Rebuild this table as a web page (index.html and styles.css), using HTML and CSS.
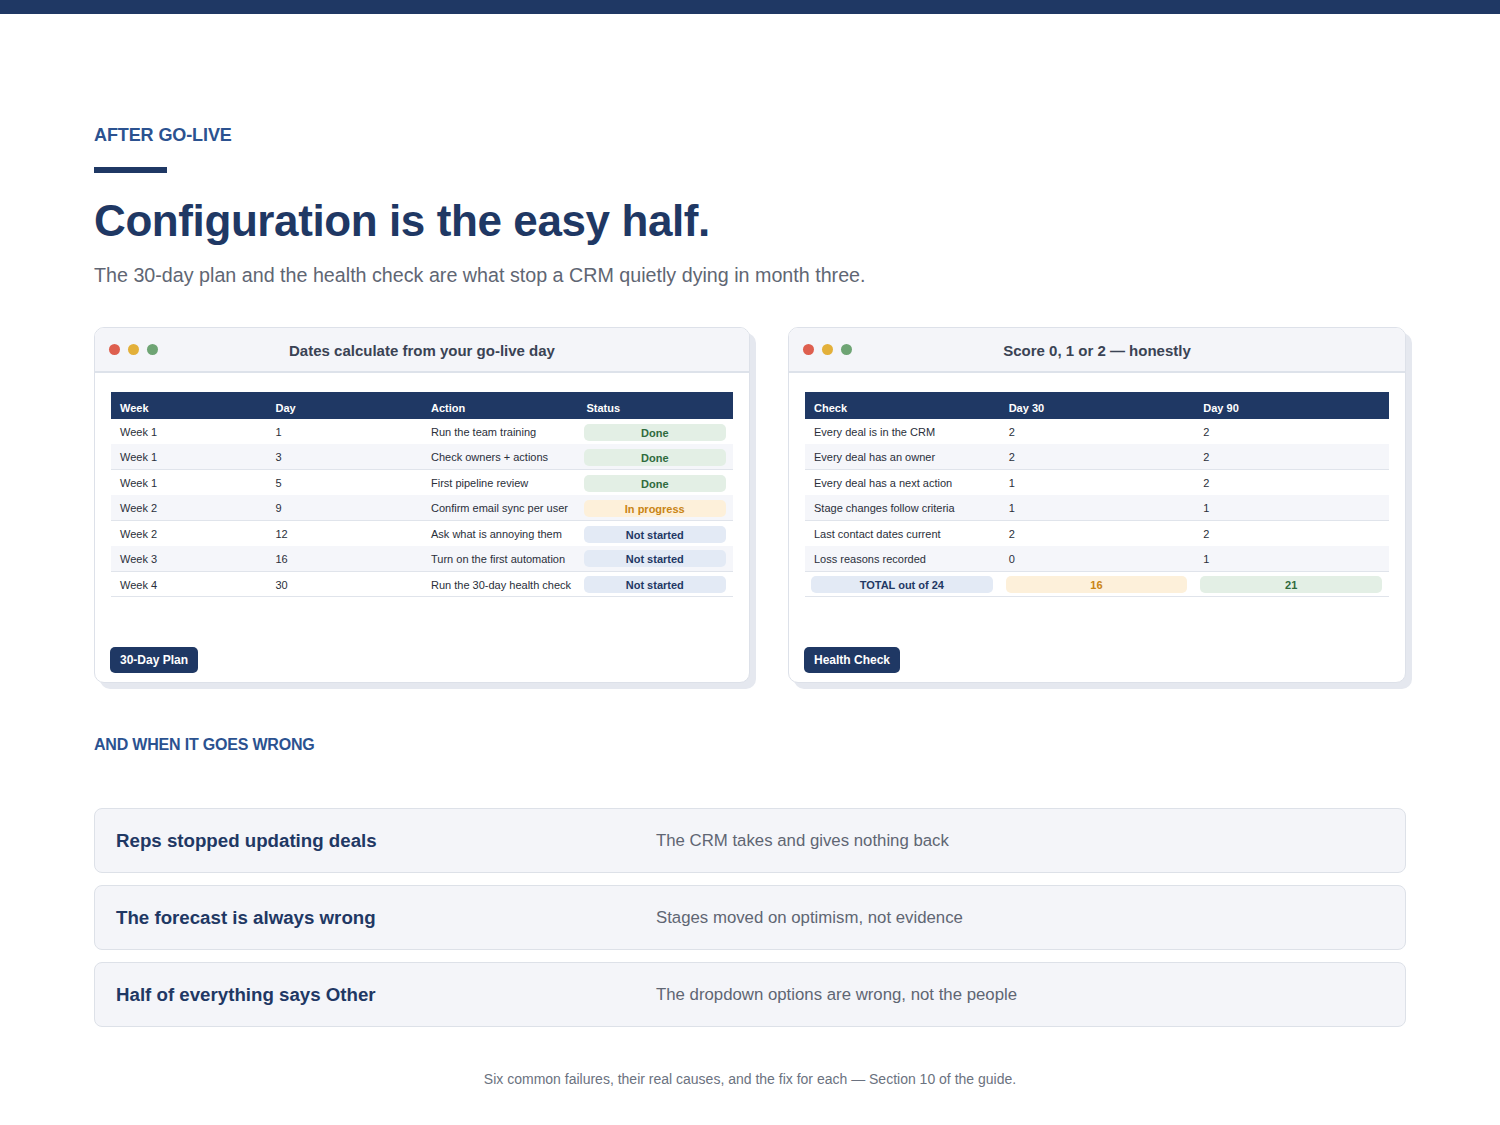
FILE: index.html
```html
<!DOCTYPE html>
<html lang="en">
<head>
<meta charset="utf-8">
<title>After go-live</title>
<link rel="stylesheet" href="styles.css">
</head>
<body>
<div class="topbar"></div>
<main class="page">
  <p class="eyebrow">AFTER GO-LIVE</p>
  <div class="rule"></div>
  <h1 class="title">Configuration is the easy half.</h1>
  <p class="lead">The 30-day plan and the health check are what stop a CRM quietly dying in month three.</p>

  <section class="cards">
    <article class="card">
      <header class="card-head">
        <span class="dots"><i class="dot red"></i><i class="dot amber"></i><i class="dot green"></i></span>
        <span class="card-title">Dates calculate from your go-live day</span>
      </header>
      <div class="card-body">
        <table class="tbl cols4">
          <thead><tr><th>Week</th><th>Day</th><th>Action</th><th>Status</th></tr></thead>
          <tbody>
            <tr><td>Week 1</td><td>1</td><td>Run the team training</td><td class="pillcell"><span class="pill done">Done</span></td></tr>
            <tr><td>Week 1</td><td>3</td><td>Check owners + actions</td><td class="pillcell"><span class="pill done">Done</span></td></tr>
            <tr><td>Week 1</td><td>5</td><td>First pipeline review</td><td class="pillcell"><span class="pill done">Done</span></td></tr>
            <tr><td>Week 2</td><td>9</td><td>Confirm email sync per user</td><td class="pillcell"><span class="pill prog">In progress</span></td></tr>
            <tr><td>Week 2</td><td>12</td><td>Ask what is annoying them</td><td class="pillcell"><span class="pill todo">Not started</span></td></tr>
            <tr><td>Week 3</td><td>16</td><td>Turn on the first automation</td><td class="pillcell"><span class="pill todo">Not started</span></td></tr>
            <tr><td>Week 4</td><td>30</td><td>Run the 30-day health check</td><td class="pillcell"><span class="pill todo">Not started</span></td></tr>
          </tbody>
        </table>
        <span class="tag">30-Day Plan</span>
      </div>
    </article>

    <article class="card">
      <header class="card-head">
        <span class="dots"><i class="dot red"></i><i class="dot amber"></i><i class="dot green"></i></span>
        <span class="card-title">Score 0, 1 or 2 — honestly</span>
      </header>
      <div class="card-body">
        <table class="tbl cols3">
          <thead><tr><th>Check</th><th>Day 30</th><th>Day 90</th></tr></thead>
          <tbody>
            <tr><td>Every deal is in the CRM</td><td>2</td><td>2</td></tr>
            <tr><td>Every deal has an owner</td><td>2</td><td>2</td></tr>
            <tr><td>Every deal has a next action</td><td>1</td><td>2</td></tr>
            <tr><td>Stage changes follow criteria</td><td>1</td><td>1</td></tr>
            <tr><td>Last contact dates current</td><td>2</td><td>2</td></tr>
            <tr><td>Loss reasons recorded</td><td>0</td><td>1</td></tr>
            <tr class="total"><td class="pillcell"><span class="pill todo">TOTAL out of 24</span></td><td class="pillcell"><span class="pill prog">16</span></td><td class="pillcell"><span class="pill done">21</span></td></tr>
          </tbody>
        </table>
        <span class="tag">Health Check</span>
      </div>
    </article>
  </section>

  <p class="eyebrow small">AND WHEN IT GOES WRONG</p>

  <section class="fails">
    <div class="fail"><h3>Reps stopped updating deals</h3><p>The CRM takes and gives nothing back</p></div>
    <div class="fail"><h3>The forecast is always wrong</h3><p>Stages moved on optimism, not evidence</p></div>
    <div class="fail"><h3>Half of everything says Other</h3><p>The dropdown options are wrong, not the people</p></div>
  </section>

  <p class="foot">Six common failures, their real causes, and the fix for each — Section 10 of the guide.</p>
</main>
</body>
</html>
```

FILE: styles.css
```css
* { box-sizing: border-box; }
html, body { margin: 0; padding: 0; background: #ffffff; }
body { font-family: "Liberation Sans", Arial, Helvetica, sans-serif; color: #1f3864; }

.topbar { height: 14px; background: #1f3864; }

.page { width: 1312px; margin: 0 0 0 94px; padding-top: 110px; }

.eyebrow { margin: 0; font-size: 18px; line-height: 22px; font-weight: 700; color: #2b5290; letter-spacing: -0.1px; }
.eyebrow.small { font-size: 16px; line-height: 20px; margin-top: 52px; letter-spacing: -0.2px; }

.rule { width: 73px; height: 6px; background: #1f3864; margin-top: 21px; }

.title { margin: 22px 0 0; font-size: 44px; line-height: 51px; font-weight: 700; color: #1f3864; letter-spacing: -0.4px; }

.lead { margin: 15px 0 0; font-size: 19.7px; line-height: 28px; color: #5f6673; }

.cards { display: grid; grid-template-columns: 656px 618px; column-gap: 38px; margin-top: 38px; }

.card { height: 356px; border: 1.5px solid #dde1e9; border-radius: 10px; background: #ffffff; box-shadow: 6px 6px 0 #e5e8ef; display: flex; flex-direction: column; overflow: hidden; }

.card-head { position: relative; height: 45px; flex: none; background: #f4f5f9; border-bottom: 2px solid #dde2ea; display: flex; align-items: center; justify-content: center; padding-top: 2px; }
.dots { position: absolute; left: 14px; top: 16px; display: flex; gap: 8px; }
.dot { display: block; width: 11px; height: 11px; border-radius: 50%; }
.dot.red { background: #de5f4f; }
.dot.amber { background: #e3b03a; }
.dot.green { background: #6ea474; }
.card-title { font-size: 15px; font-weight: 700; color: #3a4354; }

.card-body { flex: 1; display: flex; flex-direction: column; align-items: flex-start; padding: 19px 16px 9px; }

.tbl { width: 100%; border-collapse: collapse; table-layout: fixed; font-size: 11px; color: #2a2f3a; }
.tbl th { background: #1f3864; color: #ffffff; font-weight: 700; text-align: left; height: 27px; padding: 4px 2px 0 9px; }
.tbl td { height: 25.4px; padding: 1px 2px 0 9px; vertical-align: middle; white-space: nowrap; }
.tbl tbody tr:nth-child(even) td { background: #f5f6fa; }
.tbl tbody tr:nth-child(even), .tbl tbody tr:last-child { border-bottom: 1px solid #e0e4eb; }
.tbl tbody tr.total td { background: #ffffff; }
.tbl td.pillcell { padding: 1px 7px 0 6px; }

.pill { display: block; height: 17px; line-height: 18px; border-radius: 5px; text-align: center; font-weight: 700; font-size: 11px; }
.pill.done { background: #e3efe5; color: #2f6b3d; }
.pill.prog { background: #fdf0da; color: #c98413; }
.pill.todo { background: #e3eaf5; color: #1f3864; }

.tag { margin-top: auto; display: inline-block; background: #1f3864; color: #ffffff; font-size: 12px; font-weight: 700; height: 26px; line-height: 26px; padding: 0 10px; border-radius: 5px; margin-left: -1px; }

.fails { display: flex; flex-direction: column; gap: 12px; margin-top: 53px; }
.fail { height: 65px; background: #f4f5f9; border: 1.5px solid #dde1e8; border-radius: 8px; display: grid; grid-template-columns: 540px 1fr; align-items: center; padding: 0 21px; }
.fail h3 { margin: 0; font-size: 18.7px; font-weight: 700; color: #1f3864; }
.fail p { margin: 0; font-size: 16.8px; color: #5f6673; }

.foot { margin: 43px 0 0; text-align: center; font-size: 14px; line-height: 18px; color: #6b7280; }
```
